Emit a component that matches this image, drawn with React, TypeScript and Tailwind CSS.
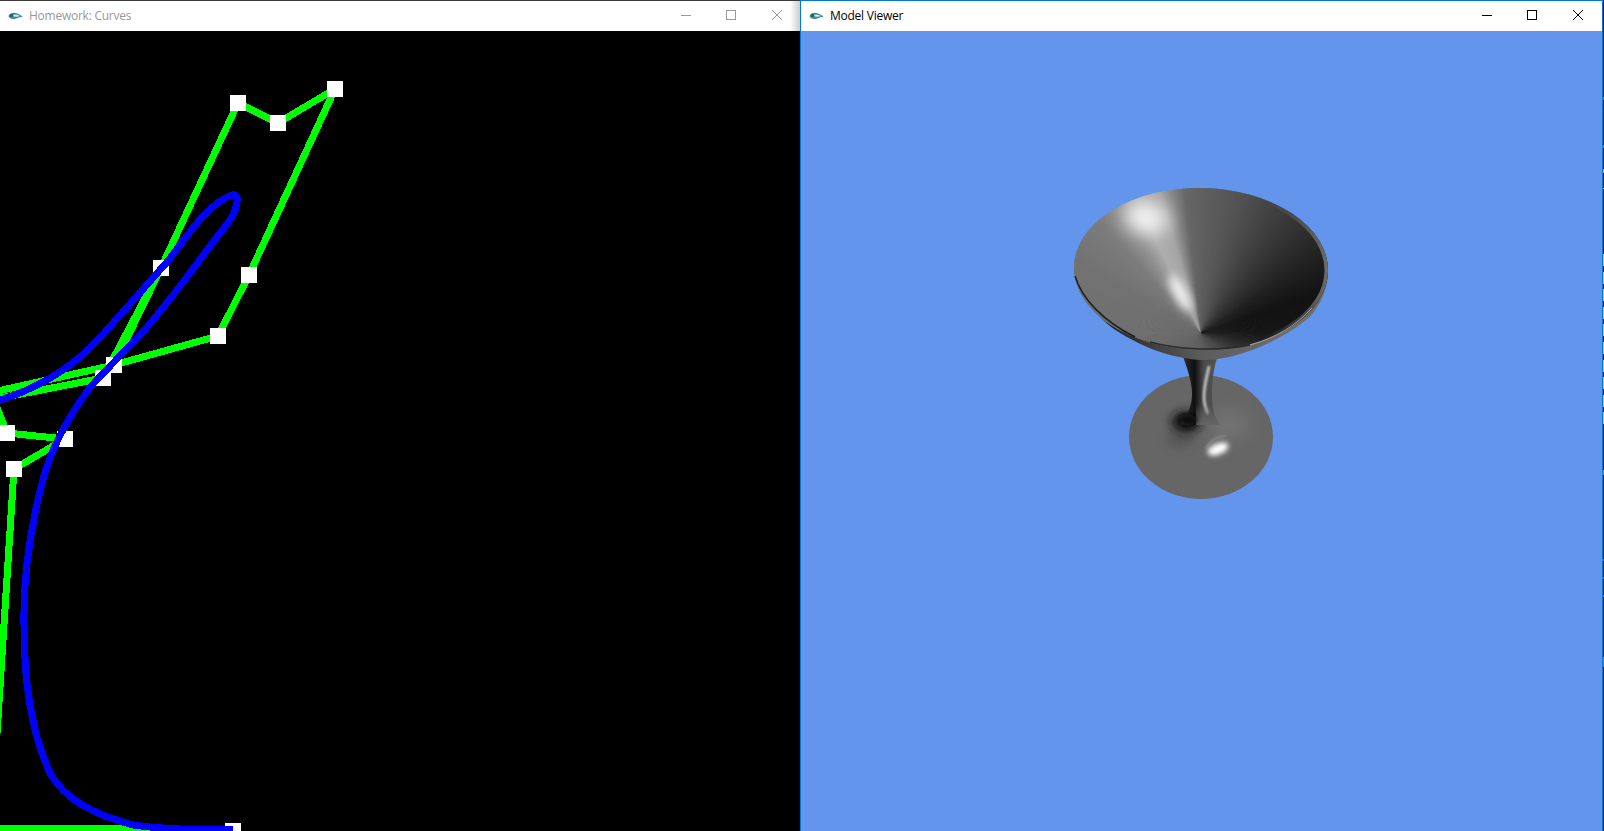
type Pt = [number, number];

const controlPoints: Pt[] = [
  [238, 103], [278, 123], [335, 89], [249, 275], [218, 336], [161, 268],
  [114, 365], [103, 378], [65, 439], [7, 433], [14, 469], [233, 831],
];

const greenLines: Pt[][] = [
  [[-20, 402], [103, 378], [161, 268], [238, 103], [278, 123], [335, 89], [249, 275], [218, 336], [114, 365], [-20, 395]],
  [[161, 268], [114, 365]],
  [[-6, 400], [7, 433], [65, 439], [14, 469], [-6, 780]],
  [[-10, 828], [150, 829], [233, 830]],
];

const blueCurve =
  "M-10 403 C30 392 65 372 90 348 C115 322 135 298 167 262 C185 240 205 205 232 195 " +
  "C236 194 238 198 237 202 C236 212 228 224 220 233 C205 252 175 295 147 327 C125 352 100 375 88 390 " +
  "C70 415 50 450 42 483 C30 530 23 580 24 625 C24 680 30 730 50 773 C65 800 95 815 133 825 C160 829 200 830 233 830";

// angular shading of the bowl around its apex, degrees clockwise from up
const stops: [number, number][] = [
  [-180, 0x60], [-120, 0x6a], [-90, 0x70], [-60, 0x72], [-42, 0x7c], [-33, 0x92], [-25, 0xae], [-16, 0xa4], [-11, 0x84],
  [-6, 0x66], [0, 0x60], [15, 0x54], [40, 0x36], [58, 0x20], [72, 0x13], [88, 0x16], [105, 0x2a], [130, 0x48], [180, 0x60],
];

function shade(a: number) {
  for (let i = 0; i < stops.length - 1; i++) {
    if (a >= stops[i][0] && a <= stops[i + 1][0]) {
      const t = (a - stops[i][0]) / (stops[i + 1][0] - stops[i][0]);
      const v = Math.round(stops[i][1] + (stops[i + 1][1] - stops[i][1]) * t);
      return `rgb(${v},${v},${v})`;
    }
  }
  return "#606060";
}

const wedges = Array.from({ length: 360 }, (_, i) => {
  const a = -180 + i;
  const r1 = ((a - 0.3) * Math.PI) / 180;
  const r2 = ((a + 1.3) * Math.PI) / 180;
  const R = 260;
  return {
    d: `M1201 333 L${1201 + R * Math.sin(r1)} ${333 - R * Math.cos(r1)} L${1201 + R * Math.sin(r2)} ${333 - R * Math.cos(r2)}Z`,
    fill: shade(a + 0.5),
  };
});

// bits of other windows showing in the last pixel column
const stripDashes = Array.from({ length: 10 }, (_, i) => ({ top: 254 + i * 17.6, height: 12, color: "#bdbdbd" }));
const stripMarks = [
  { top: 97, height: 3, color: "#a06a30" },
  { top: 145, height: 3, color: "#8a7060" },
  { top: 169, height: 4, color: "#e09a30" },
  { top: 188, height: 1, color: "#cfe0f0" },
  { top: 470, height: 5, color: "#b08040" },
  { top: 559, height: 2, color: "#8a5aa8" },
  { top: 577, height: 2, color: "#8a5aa8" },
  { top: 595, height: 2, color: "#8a5aa8" },
  { top: 657, height: 10, color: "#777777" },
];

function AppIcon() {
  return (
    <svg width="15" height="8" viewBox="0 0 16 9" className="shrink-0">
      <path d="M0 4.5 C2 1 6 0 9 1.5 C12 2.5 14 3.5 16 5.5 C12 5.5 11 6.5 8 7.5 C4 8.5 1 7.5 0 4.5Z" fill="#3f8f98" />
      <path d="M5 3.5 C8 2.5 11 3.5 13 4.5 C10 5.5 7 5.5 5 4.5Z" fill="#dcecee" />
      <circle cx="3.5" cy="4" r="2" fill="#1f6672" />
    </svg>
  );
}

function MinGlyph() {
  return (
    <svg width="10" height="10" viewBox="0 0 10 10" className="block" shapeRendering="crispEdges">
      <path d="M0 5.5H10" stroke="currentColor" strokeWidth="1" />
    </svg>
  );
}

function MaxGlyph() {
  return (
    <svg width="10" height="10" viewBox="0 0 10 10" className="block" shapeRendering="crispEdges">
      <rect x="0.5" y="0.5" width="9" height="9" fill="none" stroke="currentColor" strokeWidth="1" />
    </svg>
  );
}

function CloseGlyph() {
  return (
    <svg width="10" height="10" viewBox="0 0 10 10" className="block">
      <path d="M0 0L10 10M10 0L0 10" stroke="currentColor" strokeWidth="1" />
    </svg>
  );
}

function TitleBar({ title, active }: { title: string; active?: boolean }) {
  return (
    <div className="flex h-[30px] shrink-0 items-center bg-white">
      <div className="flex items-center pl-[8px]">
        <AppIcon />
      </div>
      <span
        className={`ml-[6px] font-['Open_Sans',sans-serif] text-[12px] leading-none tracking-[-0.25px] ${active ? "text-black" : "text-[#999999]"}`}
      >
        {title}
      </span>
      <div className={`ml-auto flex h-full pt-[9px] ${active ? "pr-px text-black" : "text-[#999999]"}`}>
        <div className="flex w-[44px] justify-center">
          <MinGlyph />
        </div>
        <div className="flex w-[46px] justify-center">
          <MaxGlyph />
        </div>
        <div className="flex w-[46px] justify-center">
          <CloseGlyph />
        </div>
      </div>
    </div>
  );
}

function CurvesCanvas() {
  return (
    <svg width="800" height="800" viewBox="0 31 800 800" className="block bg-black">
      {greenLines.map((pts, i) => (
        <polyline
          key={i}
          points={pts.map((p) => p.join(",")).join(" ")}
          fill="none"
          stroke="#00ff00"
          strokeWidth="7"
          strokeLinejoin="round"
          shapeRendering="crispEdges"
        />
      ))}
      {controlPoints.map(([x, y], i) => (
        <rect key={i} x={x - 8} y={y - 8} width="16" height="16" fill="#ffffff" shapeRendering="crispEdges" />
      ))}
      <path d={blueCurve} fill="none" stroke="#0000ff" strokeWidth="7" shapeRendering="crispEdges" />
    </svg>
  );
}

function Goblet() {
  return (
    <svg width="801" height="800" viewBox="801 31 801 800" className="block">
      <defs>
        <clipPath id="bowl">
          <ellipse cx="1201" cy="269" rx="127" ry="81" transform="rotate(1 1201 269)" />
        </clipPath>
        <clipPath id="band">
          <polygon points="1201,333 1180,183 1000,183 1000,333 1201,420" />
        </clipPath>
        <clipPath id="base">
          <ellipse cx="1201" cy="437" rx="72" ry="62" />
        </clipPath>
        <clipPath id="stemClip">
          <path d="M1183 356 C1186 366 1192 380 1192 393 C1192 403 1190 412 1180 425 L1220 425 C1215 418 1212 410 1212 393 C1212 382 1213 372 1217 358Z" />
        </clipPath>
        <linearGradient id="shell" x1="0" x2="1" y1="0" y2="0">
          <stop offset="0" stopColor="#141414" />
          <stop offset="0.2" stopColor="#2e2e2e" />
          <stop offset="0.5" stopColor="#5c5c5c" />
          <stop offset="0.8" stopColor="#6c6c6c" />
          <stop offset="1" stopColor="#707070" />
        </linearGradient>
        <linearGradient id="stem" x1="0" x2="1" y1="0" y2="0">
          <stop offset="0" stopColor="#3a3a3a" />
          <stop offset="0.38" stopColor="#101010" />
          <stop offset="0.58" stopColor="#4a4a4a" />
          <stop offset="0.8" stopColor="#505050" />
          <stop offset="1" stopColor="#666666" />
        </linearGradient>
        <linearGradient id="stemFade" x1="0" x2="0" y1="0" y2="1">
          <stop offset="0" stopColor="#666666" stopOpacity="0" />
          <stop offset="1" stopColor="#666666" stopOpacity="1" />
        </linearGradient>
        <linearGradient id="rimRight" x1="0" x2="1" y1="0" y2="0">
          <stop offset="0" stopColor="#666666" stopOpacity="0" />
          <stop offset="0.75" stopColor="#666666" stopOpacity="0" />
          <stop offset="1" stopColor="#777777" stopOpacity="0.9" />
        </linearGradient>
        <filter id="b1" x="-100%" y="-100%" width="300%" height="300%"><feGaussianBlur stdDeviation="0.8" /></filter>
        <filter id="b2" x="-100%" y="-100%" width="300%" height="300%"><feGaussianBlur stdDeviation="2.5" /></filter>
        <filter id="b4" x="-100%" y="-100%" width="300%" height="300%"><feGaussianBlur stdDeviation="5" /></filter>
        <filter id="b8" x="-100%" y="-100%" width="300%" height="300%"><feGaussianBlur stdDeviation="9" /></filter>
      </defs>

      {/* foot */}
      <ellipse cx="1201" cy="437" rx="72" ry="62" fill="#666666" />
      <g clipPath="url(#base)">
        <ellipse cx="1228" cy="425" rx="20" ry="12" fill="#767676" filter="url(#b8)" />
        <ellipse cx="1180" cy="440" rx="14" ry="8" fill="#575757" filter="url(#b4)" />
        <ellipse cx="1186" cy="422" rx="15" ry="11" fill="#161616" filter="url(#b4)" />
        <path d="M1206 448 C1210 440 1218 436 1226 436" fill="none" stroke="#8c8c8c" strokeWidth="1.5" filter="url(#b1)" />
        <ellipse cx="1218" cy="449" rx="11" ry="5.5" fill="#ffffff" transform="rotate(-22 1218 449)" filter="url(#b2)" />
      </g>

      {/* stem */}
      <g clipPath="url(#stemClip)">
        <rect x="1178" y="354" width="44" height="72" fill="url(#stem)" />
        <path d="M1209 366 C1207 376 1204 386 1204 397 C1204 403 1205.5 408 1208 414" fill="none" stroke="#d0d0d0" strokeWidth="2.5" filter="url(#b1)" />
        <rect x="1196" y="404" width="26" height="22" fill="url(#stemFade)" />
      </g>
      <ellipse cx="1188" cy="420" rx="9" ry="6" fill="#0a0a0a" filter="url(#b2)" />

      {/* underside of the bowl */}
      <path d="M1074 270 C1078 295 1100 320 1117 331 C1140 346 1170 358 1200 360 C1235 361 1280 342 1310 317 C1320 305 1327 292 1328 273Z" fill="url(#shell)" />

      {/* bowl inside */}
      <g clipPath="url(#bowl)">
        {wedges.map((w, i) => (
          <path key={i} d={w.d} fill={w.fill} />
        ))}
        <g clipPath="url(#band)">
          <ellipse cx="1146" cy="218" rx="22" ry="16" fill="#f2f2f2" transform="rotate(15 1146 218)" filter="url(#b8)" />
          <ellipse cx="1180" cy="293" rx="6" ry="20" fill="#f6f6f6" transform="rotate(-28 1180 293)" filter="url(#b4)" />
        </g>
        <ellipse cx="1201" cy="269" rx="127" ry="81" fill="none" stroke="url(#rimRight)" strokeWidth="7" transform="rotate(1 1201 269)" />
      </g>
      <path d="M1075 276 C1082 300 1105 322 1135 337" fill="none" stroke="#1e1e1e" strokeWidth="1.5" />
      <path d="M1150 342 C1175 349 1215 352 1250 345" fill="none" stroke="#2a2a2a" strokeWidth="1.5" />
      <path d="M1250 345 C1275 338 1296 326 1312 308" fill="none" stroke="#a0a0a0" strokeWidth="1" />
    </svg>
  );
}

export default function App() {
  return (
    <div className="flex h-[831px] w-[1604px] overflow-hidden bg-[#1c1c1c]">
      <div className="relative flex w-[800px] shrink-0 flex-col border-t border-[#3a3a3a] bg-white">
        <TitleBar title="Homework: Curves" />
        <CurvesCanvas />
        <div className="absolute right-0 top-0 h-[31px] w-[10px] bg-gradient-to-r from-transparent to-black/20" />
      </div>
      <div className="flex w-[803px] shrink-0 flex-col border-x border-t border-[#0078d7] bg-[#6495ed]">
        <TitleBar title="Model Viewer" active />
        <Goblet />
      </div>
      <div className="relative w-px shrink-0 bg-[#1c1c1c]">
        {[...stripDashes, ...stripMarks].map((m, i) => (
          <div
            key={i}
            className="absolute left-0 w-px"
            style={{ top: m.top, height: m.height, backgroundColor: m.color }}
          />
        ))}
      </div>
    </div>
  );
}
